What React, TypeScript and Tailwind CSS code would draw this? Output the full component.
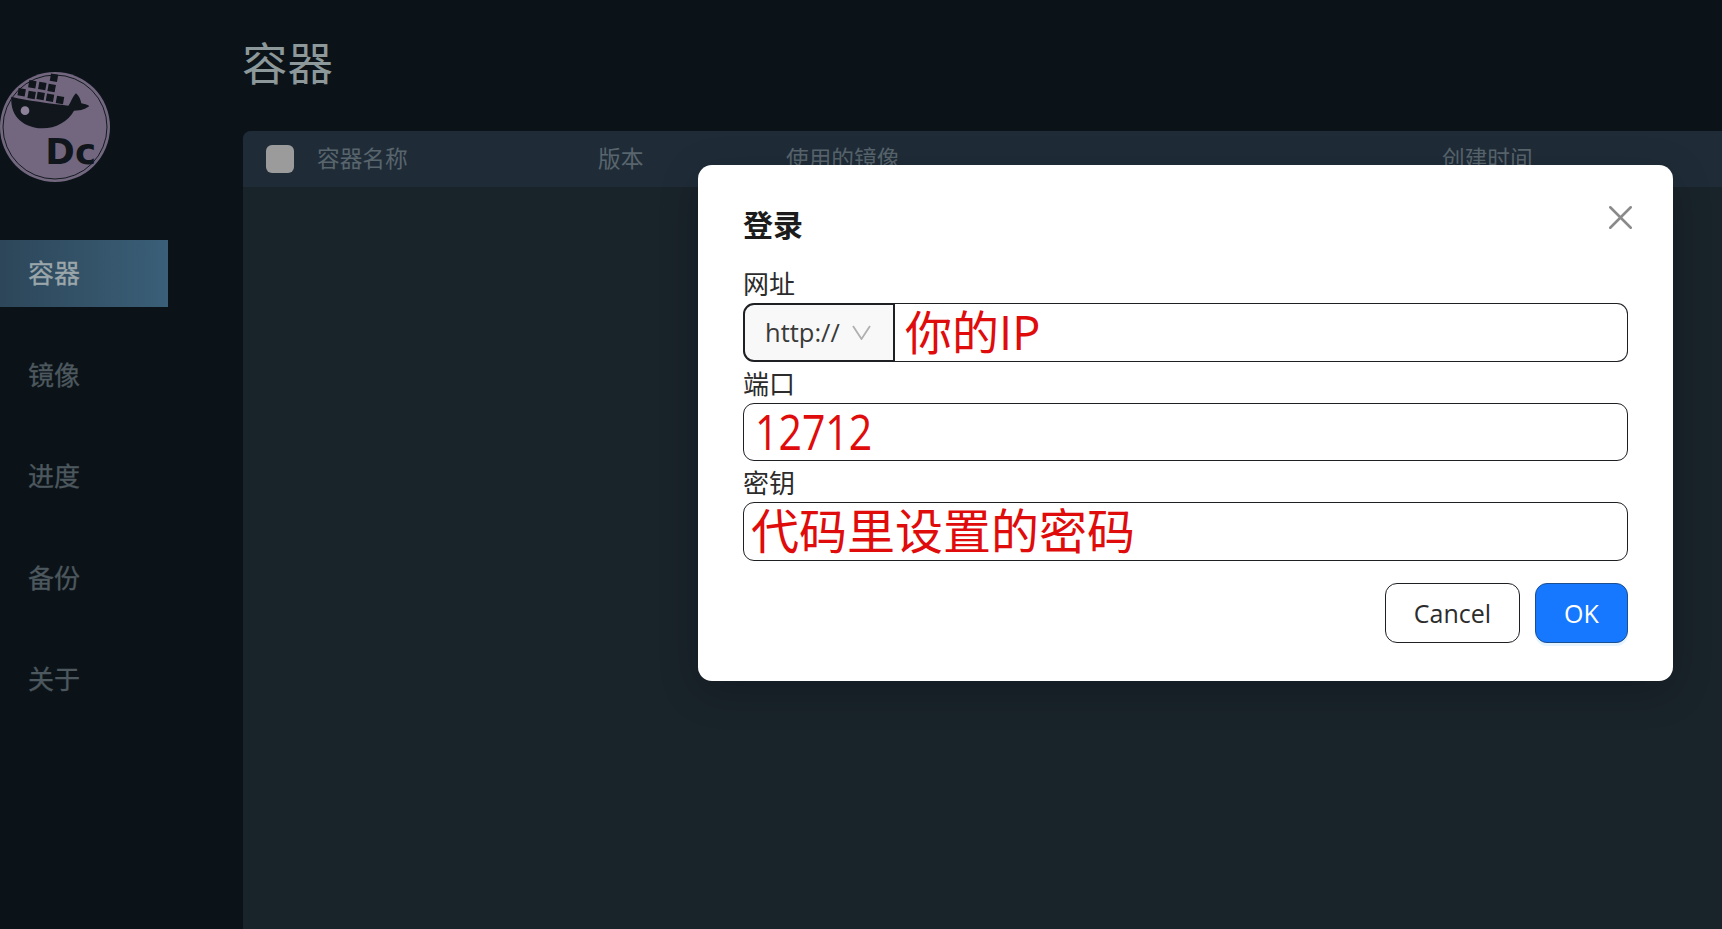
import { X } from 'lucide-react';

const navItems = ['容器', '镜像', '进度', '备份', '关于'];

const Logo = () => (
  <svg viewBox="0 0 110 112" className="h-[112px] w-[110px]">
    <circle cx="55" cy="56" r="55" fill="#72677f" />
    <circle cx="55" cy="56" r="52" fill="none" stroke="#141a20" strokeWidth="1" />
    <g transform="scale(0.3333) translate(0,-93)" fill="#10161c">
      <path d="M34 170 C80 182 150 190 205 197 C212 190 216 172 228 160 C238 168 242 180 244 190 C252 192 262 194 268 198 C258 206 245 212 222 212 C205 245 165 266 125 265 C75 262 30 235 34 170 Z" />
      <circle cx="75" cy="212" r="13" fill="#8d8199" />
      {[
        [65, 157], [95, 165], [122, 168], [150, 173], [180, 180],
        [97, 133], [127, 138], [155, 144], [162, 113],
      ].map(([x, y]) => (
        <rect key={`${x}-${y}`} x={x - 11} y={y - 11} width="22" height="22" transform={`rotate(10 ${x} ${y})`} />
      ))}
      <text x="136" y="373" fontSize="104" fontWeight="700" fontFamily="DejaVu Sans, sans-serif" textLength="152" lengthAdjust="spacingAndGlyphs">Dc</text>
    </g>
  </svg>
);

const FieldInput = ({ children, className }: { children: React.ReactNode; className: string }) => (
  <div className={`flex items-center rounded-[11px] border-[1.5px] border-[#1e2024] bg-white pl-[6px] text-[#e00b0b] ${className}`}>
    {children}
  </div>
);

export default function App() {
  return (
    <div className="relative flex h-[929px] w-[1722px] overflow-hidden bg-[#0b1319] font-['Open_Sans','Noto_Sans_CJK_SC',sans-serif]">
      <aside className="w-[243px] shrink-0 pt-[71px]">
        <Logo />
        <nav className="mt-[57px] flex w-[168px] flex-col gap-[34.5px]">
          {navItems.map((item, i) => (
            <div
              key={item}
              className={`flex h-[67px] items-center pl-[28px] text-[26px] [-webkit-text-stroke:0.3px] ${
                i === 0 ? 'bg-gradient-to-r from-[#2d4659] to-[#3a5f78] text-[#9aa6aa]' : 'text-[#4d585e]'
              }`}
            >
              {item}
            </div>
          ))}
        </nav>
      </aside>

      <main className="flex min-w-0 flex-1 flex-col">
        <h1 className="-ml-[1px] flex h-[131px] items-start pt-[31px] text-[45.5px] leading-[64px] font-normal text-[#8d989a]">容器</h1>
        <div className="flex-1 rounded-tl-[8px] bg-[#19232a]">
          <div className="flex h-[56px] items-center rounded-tl-[8px] bg-[#1f2c38] pl-[23px] text-[22.7px] text-[#59656d]">
            <span className="h-[28px] w-[28px] rounded-[6px] bg-[#9b9b9b]" />
            <span className="ml-[23px] w-[281px]">容器名称</span>
            <span className="w-[188px]">版本</span>
            <span className="w-[656px]">使用的镜像</span>
            <span>创建时间</span>
          </div>
        </div>
      </main>

      <div className="absolute top-[165px] left-[698px] flex h-[516px] w-[975px] flex-col rounded-[14px] bg-white px-[45px] pt-[39px] shadow-[0_10px_40px_rgba(0,0,0,0.2)]">
        <X className="absolute top-[32px] right-[32px] h-[41px] w-[41px] text-[#8a8a8a]" strokeWidth={1.5} />
        <h2 className="h-[58px] text-[30px] leading-[42px] font-bold text-[#1c1c1c]">登录</h2>
        <div className="flex h-[41px] items-end pb-[2px] text-[26px] leading-[34px] text-[#2c2c2c]">网址</div>
        <div className="flex h-[59px]">
          <div className="flex w-[152px] items-center rounded-l-[11px] border-[2px] border-[#1e2024] bg-[#f8f8f8] pl-[20px] text-[25.5px] text-[#3a3a3a]">
            http://
            <svg viewBox="0 0 19 15" className="ml-[12px] h-[15px] w-[19px] text-[#b0b0b0]" fill="none" stroke="currentColor" strokeWidth="1.8">
              <path d="M1 1 L9.5 14 L18 1" />
            </svg>
          </div>
          <FieldInput className="h-[59px] flex-1 rounded-l-none border-l-0 pb-[2px] pl-[10px] text-[47px] leading-[56px]">你的IP</FieldInput>
        </div>
        <div className="flex h-[41px] items-end pb-[2px] text-[26px] leading-[34px] text-[#2c2c2c]">端口</div>
        <FieldInput className="h-[58px] pl-[11px]">
          <span className="-mt-[3px] inline-block origin-left scale-x-[0.82] text-[50px] leading-[54px]">12712</span>
        </FieldInput>
        <div className="flex h-[41px] items-end pb-[2px] text-[26px] leading-[34px] text-[#2c2c2c]">密钥</div>
        <FieldInput className="h-[59px] pb-[2px] pl-[7px] text-[48px] leading-[56px]">代码里设置的密码</FieldInput>
        <div className="mt-[22px] flex justify-end gap-[15px]">
          <button className="h-[60px] w-[135px] rounded-[12px] border-[1.5px] border-[#1e2024] bg-white pt-[2px] text-[25px] text-[#2c2c2c]">Cancel</button>
          <button className="h-[60px] w-[93px] rounded-[12px] border-[1.5px] border-[#1b4f8f] bg-[#1677ff] pt-[2px] text-[25px] text-white shadow-[0_3px_0_rgba(5,145,255,0.1)]">OK</button>
        </div>
      </div>
    </div>
  );
}
